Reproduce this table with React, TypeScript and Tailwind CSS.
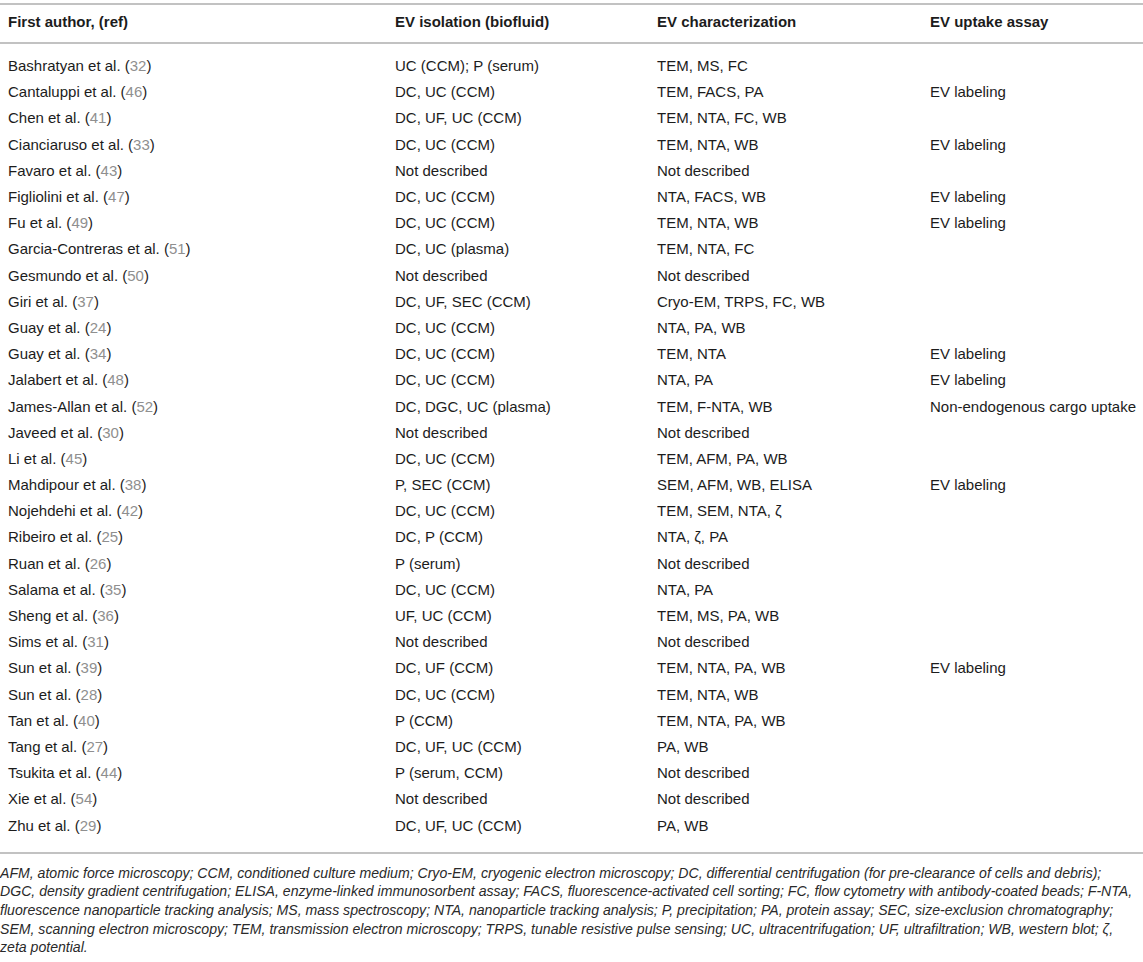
type Row = {
  author: string;
  ref: string;
  isolation: string;
  characterization: string;
  uptake?: string;
};

const rows: Row[] = [
  { author: "Bashratyan et al.", ref: "32", isolation: "UC (CCM); P (serum)", characterization: "TEM, MS, FC" },
  { author: "Cantaluppi et al.", ref: "46", isolation: "DC, UC (CCM)", characterization: "TEM, FACS, PA", uptake: "EV labeling" },
  { author: "Chen et al.", ref: "41", isolation: "DC, UF, UC (CCM)", characterization: "TEM, NTA, FC, WB" },
  { author: "Cianciaruso et al.", ref: "33", isolation: "DC, UC (CCM)", characterization: "TEM, NTA, WB", uptake: "EV labeling" },
  { author: "Favaro et al.", ref: "43", isolation: "Not described", characterization: "Not described" },
  { author: "Figliolini et al.", ref: "47", isolation: "DC, UC (CCM)", characterization: "NTA, FACS, WB", uptake: "EV labeling" },
  { author: "Fu et al.", ref: "49", isolation: "DC, UC (CCM)", characterization: "TEM, NTA, WB", uptake: "EV labeling" },
  { author: "Garcia-Contreras et al.", ref: "51", isolation: "DC, UC (plasma)", characterization: "TEM, NTA, FC" },
  { author: "Gesmundo et al.", ref: "50", isolation: "Not described", characterization: "Not described" },
  { author: "Giri et al.", ref: "37", isolation: "DC, UF, SEC (CCM)", characterization: "Cryo-EM, TRPS, FC, WB" },
  { author: "Guay et al.", ref: "24", isolation: "DC, UC (CCM)", characterization: "NTA, PA, WB" },
  { author: "Guay et al.", ref: "34", isolation: "DC, UC (CCM)", characterization: "TEM, NTA", uptake: "EV labeling" },
  { author: "Jalabert et al.", ref: "48", isolation: "DC, UC (CCM)", characterization: "NTA, PA", uptake: "EV labeling" },
  { author: "James-Allan et al.", ref: "52", isolation: "DC, DGC, UC (plasma)", characterization: "TEM, F-NTA, WB", uptake: "Non-endogenous cargo uptake" },
  { author: "Javeed et al.", ref: "30", isolation: "Not described", characterization: "Not described" },
  { author: "Li et al.", ref: "45", isolation: "DC, UC (CCM)", characterization: "TEM, AFM, PA, WB" },
  { author: "Mahdipour et al.", ref: "38", isolation: "P, SEC (CCM)", characterization: "SEM, AFM, WB, ELISA", uptake: "EV labeling" },
  { author: "Nojehdehi et al.", ref: "42", isolation: "DC, UC (CCM)", characterization: "TEM, SEM, NTA, ζ" },
  { author: "Ribeiro et al.", ref: "25", isolation: "DC, P (CCM)", characterization: "NTA, ζ, PA" },
  { author: "Ruan et al.", ref: "26", isolation: "P (serum)", characterization: "Not described" },
  { author: "Salama et al.", ref: "35", isolation: "DC, UC (CCM)", characterization: "NTA, PA" },
  { author: "Sheng et al.", ref: "36", isolation: "UF, UC (CCM)", characterization: "TEM, MS, PA, WB" },
  { author: "Sims et al.", ref: "31", isolation: "Not described", characterization: "Not described" },
  { author: "Sun et al.", ref: "39", isolation: "DC, UF (CCM)", characterization: "TEM, NTA, PA, WB", uptake: "EV labeling" },
  { author: "Sun et al.", ref: "28", isolation: "DC, UC (CCM)", characterization: "TEM, NTA, WB" },
  { author: "Tan et al.", ref: "40", isolation: "P (CCM)", characterization: "TEM, NTA, PA, WB" },
  { author: "Tang et al.", ref: "27", isolation: "DC, UF, UC (CCM)", characterization: "PA, WB" },
  { author: "Tsukita et al.", ref: "44", isolation: "P (serum, CCM)", characterization: "Not described" },
  { author: "Xie et al.", ref: "54", isolation: "Not described", characterization: "Not described" },
  { author: "Zhu et al.", ref: "29", isolation: "DC, UF, UC (CCM)", characterization: "PA, WB" },
];

const cols = "grid grid-cols-[395px_262px_273px_1fr]";

export default function App() {
  return (
    <div className="min-h-[962px] w-[1143px] bg-white pt-[3px] font-['Liberation_Sans',Arial,sans-serif] text-[#1c1c1c]">
      {/* 表头 */}
      <div
        className={`${cols} border-y-2 border-[#c2c2c2] pt-[8px] pb-[11px] text-[15px] leading-[18px] font-bold whitespace-nowrap`}
      >
        <div className="pl-2">First author, (ref)</div>
        <div>EV isolation (biofluid)</div>
        <div>EV characterization</div>
        <div>EV uptake assay</div>
      </div>

      {/* 数据行 */}
      <div className="border-b-2 border-[#c2c2c2] pt-[9px] pb-[13px]">
        {rows.map((r, i) => (
          <div
            key={i}
            className={`${cols} h-[26.2px] items-center text-[15px] leading-[18px] whitespace-nowrap`}
          >
            <div className="pl-2">
              {r.author} (<span className="text-[#8f8f8f]">{r.ref}</span>)
            </div>
            <div>{r.isolation}</div>
            <div>{r.characterization}</div>
            <div>{r.uptake ?? ""}</div>
          </div>
        ))}
      </div>

      {/* 缩写说明 */}
      <p className="pt-[10px] text-[14.1px] leading-[18.7px] italic text-[#2a2a2a] whitespace-nowrap">
        AFM, atomic force microscopy; CCM, conditioned culture medium; Cryo-EM, cryogenic electron microscopy; DC,
        differential centrifugation (for pre-clearance of cells and debris);
        <br />
        DGC, density gradient centrifugation; ELISA, enzyme-linked immunosorbent assay; FACS, fluorescence-activated
        cell sorting; FC, flow cytometry with antibody-coated beads; F-NTA,
        <br />
        fluorescence nanoparticle tracking analysis; MS, mass spectroscopy; NTA, nanoparticle tracking analysis; P,
        precipitation; PA, protein assay; SEC, size-exclusion chromatography;
        <br />
        SEM, scanning electron microscopy; TEM, transmission electron microscopy; TRPS, tunable resistive pulse
        sensing; UC, ultracentrifugation; UF, ultrafiltration; WB, western blot; ζ,
        <br />
        zeta potential.
      </p>
    </div>
  );
}
